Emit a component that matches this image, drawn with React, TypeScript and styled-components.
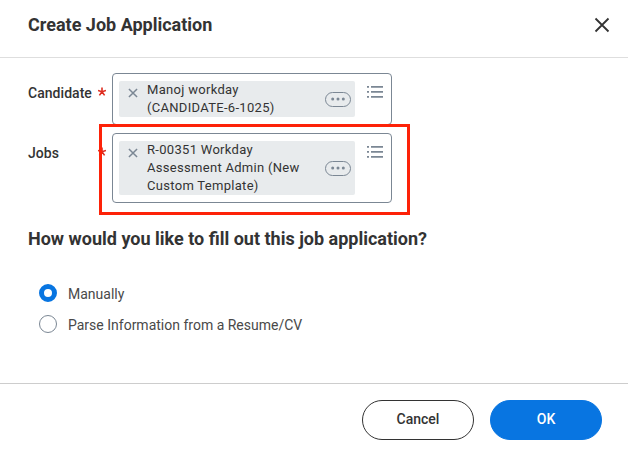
import React from "react";
import styled, { createGlobalStyle } from "styled-components";

const GlobalStyle = createGlobalStyle`
  * { box-sizing: border-box; }
  body {
    margin: 0;
    background: #fff;
    color: #333;
    font-family: Roboto, "Liberation Sans", sans-serif;
  }
`;

const Dialog = styled.main`
  display: flex;
  flex-direction: column;
  width: 628px;
  height: 451px;
  overflow: hidden;
`;

const Header = styled.header`
  display: flex;
  align-items: center;
  justify-content: space-between;
  height: 58px;
  padding: 0 18px 8px 28px;
  border-bottom: 1px solid #dedede;
`;

const Title = styled.h1`
  margin: 0;
  font-size: 18px;
  line-height: 24px;
  font-weight: 700;
`;

const IconButton = styled.button`
  display: flex;
  padding: 0;
  border: 0;
  background: none;
`;

const Body = styled.section`
  flex: 1;
  padding: 15px 28px 0;
`;

const Fields = styled.div`
  position: relative;
  display: flex;
  flex-direction: column;
  gap: 8px;
`;

const FieldRow = styled.div`
  display: grid;
  grid-template-columns: 84px 280px;
`;

const Label = styled.div`
  display: flex;
  justify-content: space-between;
  height: 20px;
  margin-top: 10px;
  padding-right: 6px;
  font-size: 14px;
  line-height: 20px;
  font-weight: 500;
  letter-spacing: 0.04px;
`;

const Prompt = styled.div`
  display: flex;
  justify-content: space-between;
  padding: 7px 8px 7px 6px;
  border: 1px solid #7b8794;
  border-radius: 4px;
`;

const Chip = styled.div`
  display: grid;
  grid-template-columns: 28px 1fr 30px;
  width: 236px;
  border-radius: 2px;
  background: #e8ebed;
`;

const ChipText = styled.span`
  font-size: 13px;
  line-height: 18px;
  letter-spacing: 0.3px;
  white-space: pre;
`;

const ChipRemove = styled(IconButton)`
  align-self: start;
  padding: 7px 0 0 9px;
`;

const ChipMore = styled(IconButton)`
  align-self: center;
`;

const ListButton = styled(IconButton)`
  align-self: start;
  padding-top: 5px;
`;

const Highlight = styled.div`
  position: absolute;
  top: 51px;
  left: 71px;
  width: 311px;
  height: 91px;
  border: 3px solid #fd2208;
  pointer-events: none;
`;

const Question = styled.h2`
  margin: 24px 0 0;
  font-size: 18px;
  line-height: 24px;
  font-weight: 700;
`;

const RadioGroup = styled.div`
  display: flex;
  flex-direction: column;
  gap: 13px;
  padding: 33px 0 0 11px;
`;

const RadioOption = styled.label`
  display: flex;
  gap: 11px;
  height: 18px;
  color: #494949;
  font-size: 14px;
  line-height: 20px;
`;

const RadioDot = styled.span<{ $checked: boolean }>`
  width: 18px;
  height: 18px;
  border: ${({ $checked }) => ($checked ? "5px solid #0875e1" : "1px solid #7b8794")};
  border-radius: 50%;
`;

const Footer = styled.footer`
  display: flex;
  justify-content: flex-end;
  gap: 16px;
  height: 68px;
  padding: 16px 26px 0 0;
  border-top: 1px solid #cdcdcd;
`;

const Button = styled.button<{ $primary?: boolean }>`
  width: 112px;
  height: 40px;
  padding: 0 0 2px;
  border: 1px solid ${({ $primary }) => ($primary ? "#0875e1" : "#333")};
  border-radius: 20px;
  background: ${({ $primary }) => ($primary ? "#0875e1" : "#fff")};
  color: ${({ $primary }) => ($primary ? "#fff" : "#333")};
  font: 500 14px/20px Roboto, "Liberation Sans", sans-serif;
`;

const RequiredMark = () => (
  <svg width="8" height="20" viewBox="0 0 8 20" stroke="#de2e21" strokeWidth="1.6">
    <path d="M4 8.8V4.6M4 8.8L0 7.5M4 8.8L8 7.5M4 8.8L1.4 12.4M4 8.8L6.6 12.4" fill="none" />
  </svg>
);

const Cross = ({ size, color, weight }: { size: number; color: string; weight: number }) => (
  <svg width={size} height={size} viewBox="0 0 16 16" stroke={color} strokeWidth={weight} fill="none">
    <path d="M1.5 1.5L14.5 14.5M14.5 1.5L1.5 14.5" />
  </svg>
);

const MoreIcon = () => (
  <svg width="26" height="15" viewBox="0 0 26 15" fill="none">
    <rect x=".5" y=".5" width="25" height="14" rx="7" stroke="#7b8794" />
    <g fill="#7b8794">
      <circle cx="7.7" cy="7" r="1.5" />
      <circle cx="13" cy="7" r="1.5" />
      <circle cx="18.3" cy="7" r="1.5" />
    </g>
  </svg>
);

const ListIcon = () => (
  <svg width="16" height="13" viewBox="0 0 16 13" fill="#7b8794">
    <path d="M0 0h2v1.7H0zM4 0h12v1.7H4zM0 5h2v1.7H0zM4 5h12v1.7H4zM0 10h2v1.7H0zM4 10h12v1.7H4z" />
  </svg>
);

const Field = ({ label, value }: { label: string; value: string }) => (
  <FieldRow>
    <Label>
      {label}
      <RequiredMark />
    </Label>
    <Prompt>
      <Chip>
        <ChipRemove aria-label="Remove">
          <Cross size={10} color="#7b8794" weight={2.4} />
        </ChipRemove>
        <ChipText>{value}</ChipText>
        <ChipMore aria-label="Related actions">
          <MoreIcon />
        </ChipMore>
      </Chip>
      <ListButton aria-label="Browse">
        <ListIcon />
      </ListButton>
    </Prompt>
  </FieldRow>
);

const options = ["Manually", "Parse Information from a Resume/CV"];

export default function App() {
  return (
    <>
      <GlobalStyle />
      <Dialog>
        <Header>
          <Title>Create Job Application</Title>
          <IconButton aria-label="Close">
            <Cross size={16} color="#333" weight={1.8} />
          </IconButton>
        </Header>
        <Body>
          <Fields>
            <Field label="Candidate" value={"Manoj workday\n(CANDIDATE-6-1025)"} />
            <Field label="Jobs" value={"R-00351 Workday\nAssessment Admin (New\nCustom Template)"} />
            <Highlight />
          </Fields>
          <Question>How would you like to fill out this job application?</Question>
          <RadioGroup role="radiogroup">
            {options.map((option, index) => (
              <RadioOption key={option}>
                <RadioDot $checked={index === 0} />
                {option}
              </RadioOption>
            ))}
          </RadioGroup>
        </Body>
        <Footer>
          <Button>Cancel</Button>
          <Button $primary>OK</Button>
        </Footer>
      </Dialog>
    </>
  );
}
